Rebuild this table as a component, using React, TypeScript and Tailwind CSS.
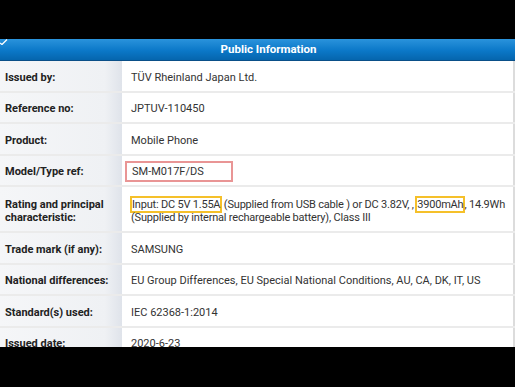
import React from 'react';

type Row = { label: React.ReactNode; value: React.ReactNode; tall?: boolean };

// yellow highlight box around a bit of text
function Mark({ children }: { children: React.ReactNode }) {
  return <span className="border-2 border-solid border-[color:#f5c02a] -mx-[1px]">{children}</span>;
}

const rows: Row[] = [
  { label: 'Issued by:', value: 'TÜV Rheinland Japan Ltd.' },
  { label: 'Reference no:', value: 'JPTUV-110450' },
  { label: 'Product:', value: 'Mobile Phone' },
  {
    label: 'Model/Type ref:',
    value: (
      <span className="inline-flex items-center h-[21px] w-[108px] -ml-[6px] pl-[5px] border-2 border-[#e99595]">
        SM-M017F/DS
      </span>
    ),
  },
  {
    label: (
      <>
        Rating and principal
        <br />
        characteristic:
      </>
    ),
    value: (
      <span className="tracking-[-0.2px]">
        <Mark>Input: DC 5V 1.55A</Mark> (Supplied from USB cable ) or DC 3.82V, , <Mark>3900mAh</Mark>, 14.9Wh
        <br />
        (Supplied by internal rechargeable battery), Class III
      </span>
    ),
    tall: true,
  },
  { label: 'Trade mark (if any):', value: 'SAMSUNG' },
  { label: 'National differences:', value: 'EU Group Differences, EU Special National Conditions, AU, CA, DK, IT, US' },
  { label: 'Standard(s) used:', value: 'IEC 62368-1:2014' },
  { label: 'Issued date:', value: '2020-6-23' },
];

export default function App() {
  return (
    <div
      className="w-[515px] h-[387px] overflow-hidden bg-black flex flex-col"
      style={{ fontFamily: 'Roboto, "Liberation Sans", sans-serif' }}
    >
      <div className="h-[39px] shrink-0 bg-black" />

      <div className="flex-1 min-h-0 overflow-hidden flex flex-col bg-white">
        {/* header bar */}
        <div className="relative h-[22px] shrink-0 flex items-center justify-center pl-[22px] bg-[linear-gradient(to_bottom,#2a93dc_0%,#0b78c8_55%,#0565ad_100%)] border-b border-[#0a4f88]">
          <svg className="absolute left-0 top-0" width="8" height="6" viewBox="0 0 8 6">
            <path d="M0 4 L2 5.5 L7 0.5" stroke="#ffffff" strokeWidth="1.3" fill="none" />
          </svg>
          <span className="text-white font-bold text-[11.5px]">Public Information</span>
        </div>

        {rows.map((r, i) => (
          <div key={i} className="flex shrink-0 border-b-2 border-[#ebebeb]">
            <div
              className={`w-[122px] shrink-0 flex items-center pl-[5px] pt-[3px] text-[11px] font-bold text-[#222] leading-[13px] bg-[linear-gradient(to_right,#f5f6f8_0%,#eff1f4_86%,#dfe3ea_100%)] ${
                r.tall ? 'min-h-[44px]' : 'min-h-[29.5px]'
              }`}
            >
              <span>{r.label}</span>
            </div>
            <div
              className={`flex-1 flex items-center pl-[9px] pt-[3px] text-[11px] text-[#333] leading-[13px] whitespace-nowrap border-r-2 border-[#dcdcdc] ${
                r.tall ? 'min-h-[44px]' : 'min-h-[29.5px]'
              }`}
            >
              {r.value}
            </div>
          </div>
        ))}
      </div>

      <div className="h-[40px] shrink-0 bg-black" />
    </div>
  );
}
